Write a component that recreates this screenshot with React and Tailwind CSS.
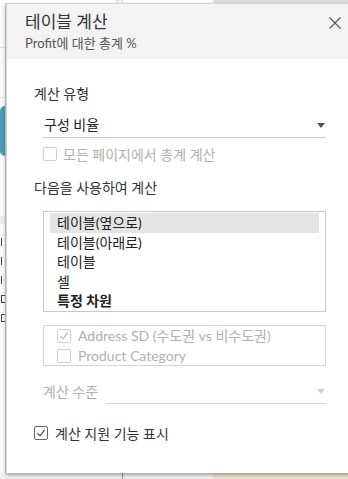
import React from 'react';

const font = { fontFamily: 'Lato, "Noto Sans CJK KR", sans-serif' };

const Check = ({ checked, disabled }) => (
  <span
    className={`flex h-[14px] w-[14px] shrink-0 items-center justify-center rounded-[2px] border bg-white ${
      disabled ? 'border-[#cfcfcf]' : 'border-[#666]'
    }`}
  >
    {checked && (
      <svg width="10" height="10" viewBox="0 0 10 10">
        <path
          d="M1.5 5.2 L4 7.8 L8.6 1.8"
          fill="none"
          stroke={disabled ? '#b8b8b8' : '#444'}
          strokeWidth="1.2"
        />
      </svg>
    )}
  </span>
);

const Caret = ({ color }) => (
  <svg width="8" height="5" viewBox="0 0 8 5">
    <path d="M0 0 H8 L4 5 Z" fill={color} />
  </svg>
);

const items = ['테이블(옆으로)', '테이블(아래로)', '테이블', '셀', '특정 차원'];

const Background = () => (
  <div className="flex h-full w-full flex-col bg-white">
    <div className="flex h-[3px] shrink-0">
      <div className="w-[116px] bg-white" />
      <div className="w-[7px] border-x border-[#ddd] bg-[#f3f3f3]" />
      <div className="w-[90px] bg-white" />
      <div className="flex-1 bg-[#d8e0e8]" />
    </div>
    <div className="flex flex-1">
      <div className="flex w-[6px] flex-col border-r border-[#d0d0d0] bg-[#fafafa]">
        <div className="h-[45px] border-b border-[#e0e0e0]" />
        <div className="h-[50px] border-b border-[#e0e0e0]" />
        <div className="mt-[8px] h-[50px] rounded-l-[6px] bg-[#4b9bb5]" />
        <div className="mt-[60px] h-[8px] bg-[#e8eef5]" />
        <div className="mt-[14px] flex flex-col gap-[11px] pl-[1px]">
          <div className="h-[8px] w-[4px] border-l border-[#444]" />
          <div className="h-[8px] w-[4px] border-l border-[#444]" />
          <div className="h-[8px] w-[4px] border-l border-[#444]" />
          <div className="h-[8px] w-[4px] border-y border-l border-[#444]" />
          <div className="h-[8px] w-[4px] border-y border-l border-[#444]" />
        </div>
      </div>
      <div className="flex-1" />
    </div>
    <div className="flex h-[6px] shrink-0">
      <div className="w-[123px] border-r border-[#999] bg-[#f2f2f2]" />
      <div className="w-[90px] bg-[#f2f2f2]" />
      <div className="flex-1 bg-[#efe3d6]" />
    </div>
  </div>
);

export default function App() {
  return (
    <div className="relative h-[479px] w-[348px] overflow-hidden" style={font}>
      <Background />

      <div className="absolute left-[6px] top-[3px] flex h-[470px] w-[360px] flex-col border-l border-t border-[#d4d4d4] bg-white shadow-[0_2px_4px_rgba(0,0,0,0.35)]">
        {/* header */}
        <div className="relative h-[55px] shrink-0 bg-[#f3f3f3] pl-[18px] pt-[7px]">
          <div className="text-[17px] leading-[22px] text-[#333]">테이블 계산</div>
          <div className="mt-[2px] text-[13px] leading-[16px] text-[#555]">Profit에 대한 총계 %</div>
          <button className="absolute left-[321px] top-[12px] flex h-[14px] w-[14px] items-center justify-center">
            <svg width="12" height="12" viewBox="0 0 12 12">
              <path d="M0.5 0.5 L11.5 11.5 M11.5 0.5 L0.5 11.5" stroke="#555" strokeWidth="1.1" />
            </svg>
          </button>
        </div>

        {/* body */}
        <div className="flex w-[319px] flex-col pl-[27px] text-[#333]">
          <div className="mt-[25px] text-[14px] leading-[20px]">계산 유형</div>

          <div className="ml-[9px] mt-[9px] flex h-[25px] items-center justify-between border-b border-[#c8c8c8] pl-[1px] pr-[1px]">
            <span className="text-[14px] leading-[20px] text-[#222]">구성 비율</span>
            <Caret color="#555" />
          </div>

          <div className="ml-[9px] mt-[7px] flex h-[18px] items-center gap-[6px]">
            <Check disabled />
            <span className="text-[14px] text-[#b0b0b0]">모든 페이지에서 총계 계산</span>
          </div>

          <div className="mt-[15px] text-[14px] leading-[20px]">다음을 사용하여 계산</div>

          <div className="ml-[9px] mt-[13px] flex h-[101px] flex-col border border-[#c8c8c8] px-[6px] pt-[1px]">
            {items.map((t, i) => (
              <div
                key={t}
                className={`flex h-[19.5px] items-center pl-[7px] text-[14px] text-[#222] ${
                  i === 0 ? 'bg-[#e4e4e4]' : ''
                } ${i === 4 ? 'font-bold' : ''}`}
              >
                {t}
              </div>
            ))}
          </div>

          <div className="ml-[9px] mt-[13px] flex h-[41px] flex-col justify-center border border-[#d4d4d4] pl-[13px]">
            <div className="flex h-[20px] items-center gap-[7px]">
              <Check checked disabled />
              <span className="text-[14px] text-[#b0b0b0]">Address SD (수도권 vs 비수도권)</span>
            </div>
            <div className="flex h-[20px] items-center gap-[7px]">
              <Check disabled />
              <span className="text-[14px] text-[#b0b0b0]">Product Category</span>
            </div>
          </div>

          <div className="ml-[9px] mt-[14px] flex h-[24px]">
            <span className="text-[14px] leading-[24px] text-[#b0b0b0]">계산 수준</span>
            <div className="ml-[8px] flex flex-1 items-center justify-end border-b border-[#d4d4d4] pr-[1px]">
              <Caret color="#cfcfcf" />
            </div>
          </div>

          <div className="mt-[20px] flex h-[18px] items-center gap-[7px]">
            <Check checked />
            <span className="text-[14px] text-[#333]">계산 지원 기능 표시</span>
          </div>
        </div>
      </div>
    </div>
  );
}
